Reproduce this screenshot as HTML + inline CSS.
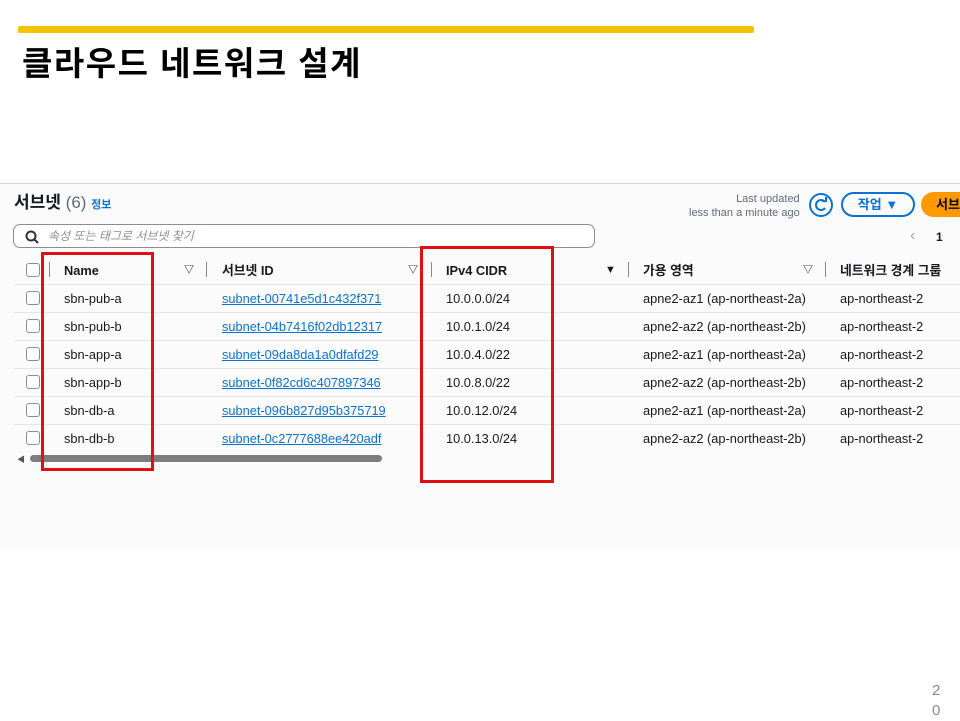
<!DOCTYPE html>
<html><head><meta charset="utf-8"><style>
body{margin:0;width:960px;height:720px;background:#fff;position:relative;overflow:hidden;font-family:"Liberation Sans","Noto Sans CJK KR",sans-serif;}
.a{position:absolute;white-space:nowrap;line-height:15px}
.shot{position:absolute;left:0;top:183px;width:960px;height:365px;background:#fbfbfb;border-top:1px solid #d5d5d5;}
.row{position:absolute;left:14px;width:946px;height:28px;border-bottom:1px solid #e6e6e6;font-size:12.8px;color:#16191f}
.cb{position:absolute;left:12px;top:7px;width:12px;height:12px;border:1.5px solid #8c8c94;border-radius:3px;background:#fff}
.lnk{color:#0972d3;text-decoration:underline}
.red{position:absolute;border:3px solid #e01010}
.sep{position:absolute;width:1px;height:15px;background:#888;top:6px}
</style></head><body>
<div class="a" style="left:18px;top:26px;width:736px;height:7px;background:#f5c400;border-radius:2px"></div>
<div class="a" style="left:22px;top:45px;font-size:33px;line-height:38px;font-weight:bold;color:#000;letter-spacing:1.5px">클라우드 네트워크 설계</div>
<div class="shot">
 <div class="a" style="left:14px;top:9px;font-size:17px;line-height:20px;font-weight:bold;color:#16191f">서브넷 <span style="font-weight:normal;color:#5f6b7a">(6)</span> <span style="font-size:11px;color:#0972d3">정보</span></div>
 <div class="a" style="left:689px;top:8px;font-size:11px;color:#5f6b7a;text-align:right;line-height:14px">&nbsp;&nbsp;&nbsp;&nbsp;&nbsp;&nbsp;&nbsp;&nbsp;&nbsp;&nbsp;&nbsp;&nbsp;Last updated<br>less than a minute ago</div>
 <svg class="a" style="left:808px;top:8px" width="26" height="26" viewBox="0 0 26 26"><circle cx="13" cy="13" r="11" fill="none" stroke="#0972d3" stroke-width="2"/><path d="M17 10a5 5 0 1 0 0 6" fill="none" stroke="#0972d3" stroke-width="2"/><path d="M14 9h4v-4" fill="none" stroke="#0972d3" stroke-width="2"/></svg>
 <div class="a" style="left:841px;top:8px;width:70px;height:21px;border:2px solid #0972d3;border-radius:14px;font-size:13px;font-weight:bold;color:#0972d3;line-height:21px;text-align:center">작업 ▼</div>
 <div class="a" style="left:921px;top:8px;width:60px;height:25px;background:#ff9900;border-radius:14px;font-size:13px;font-weight:bold;color:#000;line-height:25px;padding-left:15px">서브</div>
 <div class="a" style="left:13px;top:40px;width:580px;height:22px;border:1px solid #8c8c94;border-radius:7px;background:#fff"></div>
 <svg class="a" style="left:25px;top:46px" width="14" height="14"><circle cx="6" cy="6" r="4.5" fill="none" stroke="#333" stroke-width="2"/><path d="M9 9l4 4" stroke="#333" stroke-width="2"/></svg>
 <div class="a" style="left:48px;top:45px;font-size:12px;font-style:italic;color:#8c8c94">속성 또는 태그로 서브넷 찾기</div>
 <div class="a" style="left:910px;top:44px;font-size:16px;color:#aaa">‹</div>
 <div class="a" style="left:936px;top:46px;font-size:12px;font-weight:bold;color:#16191f">1</div>
 <div class="row" style="top:72px;font-weight:bold">
  <div class="cb" style="left:12px"></div>
  <div class="sep" style="left:35px"></div>
  <div class="a" style="left:50px;top:7px">Name</div>
  <div class="a" style="left:170px;top:7px;font-size:10px">▽</div><div class="sep" style="left:192px"></div>
  <div class="a" style="left:208px;top:7px">서브넷 ID</div>
  <div class="a" style="left:394px;top:7px;font-size:10px">▽</div><div class="sep" style="left:417px"></div>
  <div class="a" style="left:432px;top:7px">IPv4 CIDR</div>
  <div class="a" style="left:591px;top:7px;font-size:11px">▼</div><div class="sep" style="left:614px"></div>
  <div class="a" style="left:629px;top:7px">가용 영역</div>
  <div class="a" style="left:789px;top:7px;font-size:10px">▽</div><div class="sep" style="left:811px"></div>
  <div class="a" style="left:826px;top:7px">네트워크 경계 그룹</div>
 </div>
 <div class="row" style="top:100px"><div class="cb"></div><div class="a" style="left:50px;top:7px">sbn-pub-a</div><div class="a lnk" style="left:208px;top:7px">subnet-00741e5d1c432f371</div><div class="a" style="left:432px;top:7px">10.0.0.0/24</div><div class="a" style="left:629px;top:7px">apne2-az1 (ap-northeast-2a)</div><div class="a" style="left:826px;top:7px">ap-northeast-2</div></div>
 <div class="row" style="top:128px"><div class="cb"></div><div class="a" style="left:50px;top:7px">sbn-pub-b</div><div class="a lnk" style="left:208px;top:7px">subnet-04b7416f02db12317</div><div class="a" style="left:432px;top:7px">10.0.1.0/24</div><div class="a" style="left:629px;top:7px">apne2-az2 (ap-northeast-2b)</div><div class="a" style="left:826px;top:7px">ap-northeast-2</div></div>
 <div class="row" style="top:156px"><div class="cb"></div><div class="a" style="left:50px;top:7px">sbn-app-a</div><div class="a lnk" style="left:208px;top:7px">subnet-09da8da1a0dfafd29</div><div class="a" style="left:432px;top:7px">10.0.4.0/22</div><div class="a" style="left:629px;top:7px">apne2-az1 (ap-northeast-2a)</div><div class="a" style="left:826px;top:7px">ap-northeast-2</div></div>
 <div class="row" style="top:184px"><div class="cb"></div><div class="a" style="left:50px;top:7px">sbn-app-b</div><div class="a lnk" style="left:208px;top:7px">subnet-0f82cd6c407897346</div><div class="a" style="left:432px;top:7px">10.0.8.0/22</div><div class="a" style="left:629px;top:7px">apne2-az2 (ap-northeast-2b)</div><div class="a" style="left:826px;top:7px">ap-northeast-2</div></div>
 <div class="row" style="top:212px"><div class="cb"></div><div class="a" style="left:50px;top:7px">sbn-db-a</div><div class="a lnk" style="left:208px;top:7px">subnet-096b827d95b375719</div><div class="a" style="left:432px;top:7px">10.0.12.0/24</div><div class="a" style="left:629px;top:7px">apne2-az1 (ap-northeast-2a)</div><div class="a" style="left:826px;top:7px">ap-northeast-2</div></div>
 <div class="row" style="top:240px;border-bottom:none"><div class="cb"></div><div class="a" style="left:50px;top:7px">sbn-db-b</div><div class="a lnk" style="left:208px;top:7px">subnet-0c2777688ee420adf</div><div class="a" style="left:432px;top:7px">10.0.13.0/24</div><div class="a" style="left:629px;top:7px">apne2-az2 (ap-northeast-2b)</div><div class="a" style="left:826px;top:7px">ap-northeast-2</div></div>
 <div class="a" style="left:17px;top:268px;font-size:8px;color:#555">◀</div>
 <div class="a" style="left:30px;top:271px;width:352px;height:7px;background:#7d7d7d;border-radius:4px"></div>
</div>
<div class="red" style="left:41px;top:252px;width:107px;height:213px"></div>
<div class="red" style="left:420px;top:246px;width:128px;height:231px"></div>
<div class="a" style="left:932px;top:681px;font-size:15px;color:#888;line-height:20px">2<br>0</div>
</body></html>
